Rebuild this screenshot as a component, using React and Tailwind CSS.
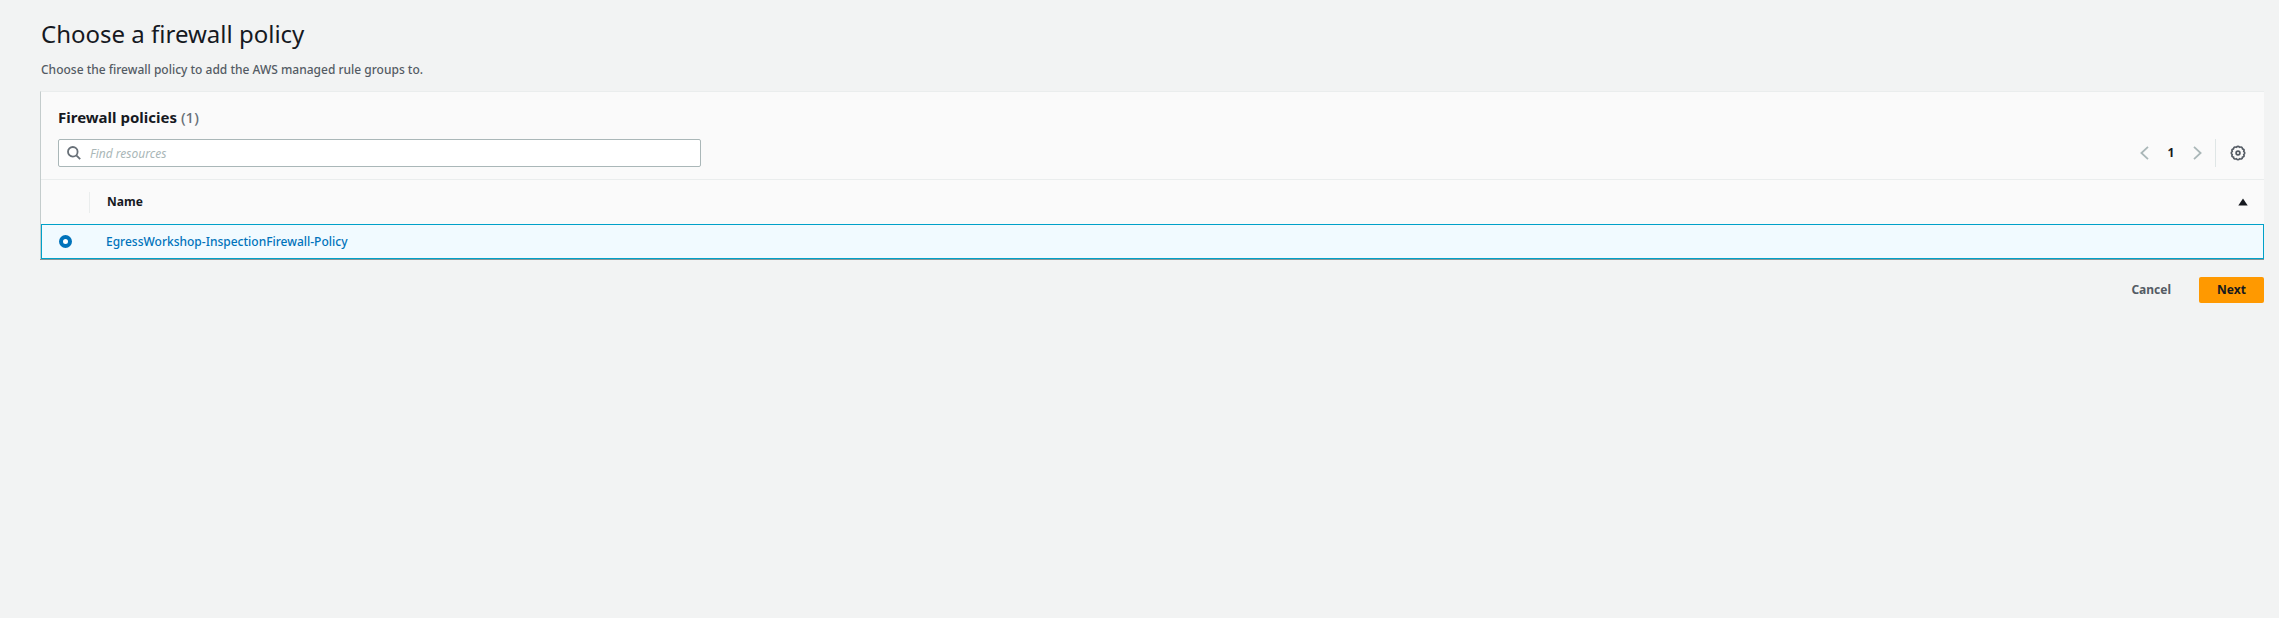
import React from "react";

const policies = [{ id: "egress", name: "EgressWorkshop-InspectionFirewall-Policy" }];

function SearchIcon() {
  return (
    <svg viewBox="0 0 14 14" className="pointer-events-none absolute left-[9px] size-[14px]" fill="none" stroke="#687078" strokeWidth="1.8" aria-hidden="true">
      <circle cx="5.8" cy="5.8" r="4.8" />
      <path d="M9.3 9.3 13.2 13.2" />
    </svg>
  );
}

function Chevron({ d }) {
  return (
    <svg viewBox="0 0 9 14" className="h-[14px] w-[9px]" fill="none" stroke="#aab7b8" strokeWidth="1.8" aria-hidden="true">
      <path d={d} />
    </svg>
  );
}

function GearIcon() {
  return (
    <svg viewBox="0 0 16 16" className="size-4" fill="none" stroke="#545b64" strokeLinejoin="round" aria-hidden="true">
      <path
        strokeWidth="1.7"
        d="M6.3 2.3Q8 .3 9.7 2.3Q12.4 1.3 12.4 3.8Q14.9 4.3 13.7 6.4Q15.7 8 13.7 9.6Q14.9 11.7 12.4 12.2Q12.4 14.7 9.7 13.7Q8 15.7 6.3 13.7Q3.6 14.7 3.6 12.2Q1.1 11.7 2.3 9.6Q.3 8 2.3 6.4Q1.1 4.3 3.6 3.8Q3.6 1.3 6.3 2.3Z"
      />
      <circle cx="8" cy="8" r="1.9" strokeWidth="1.7" />
    </svg>
  );
}

export default function App() {
  return (
    <div className="min-h-screen bg-[#f2f3f3] pt-4 pr-[15px] pl-10 font-['Noto_Sans','Open_Sans',sans-serif] text-[12px] leading-5 text-[#16191f]">
      <header className="px-px">
        <h1 className="text-[24px] leading-9">Choose a firewall policy</h1>
        <p className="mt-2 font-medium text-[#545b64]">Choose the firewall policy to add the AWS managed rule groups to.</p>
      </header>

      <main className="mt-[11px]">
        <section className="border-t border-l border-t-[#eaeded] border-l-[#c4cccc] bg-[#fafafa] shadow-[0_1px_0_#879596]">
          <div className="px-[17px] pt-[15px] pb-3">
            <h2 className="text-[15px] leading-5 font-bold">
              Firewall policies <span className="font-medium text-[#687078]">(1)</span>
            </h2>
            <div className="mt-3 flex items-center justify-between">
              <div className="relative flex w-full max-w-[643px] items-center">
                <input
                  type="search"
                  aria-label="Find resources"
                  placeholder="Find resources"
                  className="h-7 w-full rounded-[2px] border border-[#aab7b8] bg-white pr-3 pl-[31px] placeholder:text-[#aab7b8] placeholder:italic"
                />
                <SearchIcon />
              </div>
              <nav aria-label="Pagination" className="flex h-7 items-center pr-px">
                <button type="button" aria-label="Previous page" disabled>
                  <Chevron d="M8 .8 1.4 7 8 13.2" />
                </button>
                <button type="button" aria-current="page" className="w-11 text-center font-bold">1</button>
                <button type="button" aria-label="Next page" disabled>
                  <Chevron d="M1 .8 7.6 7 1 13.2" />
                </button>
                <span className="ml-[13px] h-7 w-px bg-[#dfe6e6]" />
                <button type="button" aria-label="Preferences" className="ml-[14px]">
                  <GearIcon />
                </button>
              </nav>
            </div>
          </div>

          <table className="w-full border-separate border-spacing-0 border-t border-[#eaeded] text-left">
            <thead>
              <tr className="h-11">
                <th className="w-[49px] p-0" aria-label="Selection">
                  <span className="ml-auto block h-[21px] w-px bg-[#eaeded]" />
                </th>
                <th className="py-0 pr-4 pl-[17px] font-bold">
                  <button type="button" className="flex w-full items-center justify-between">
                    Name
                    <svg viewBox="0 0 10 8" className="h-2 w-[10px]" fill="#16191f" aria-hidden="true">
                      <path d="M5 .4 9.7 7.6H.3Z" />
                    </svg>
                  </button>
                </th>
              </tr>
            </thead>
            <tbody>
              {policies.map((policy) => (
                <tr key={policy.id} className="h-[35px] bg-[#f1faff]">
                  <td className="border-y border-l border-[#00a1c9] py-0 pr-0 pl-[17px]">
                    <input
                      type="radio"
                      name="policy"
                      defaultChecked
                      aria-label={policy.name}
                      className="block size-[13px] appearance-none rounded-full border-4 border-[#0073bb] bg-white"
                    />
                  </td>
                  <td className="border-y border-r border-[#00a1c9] py-0 pr-4 pl-4">
                    <a href="#policy" className="font-medium text-[#0073bb]">{policy.name}</a>
                  </td>
                </tr>
              ))}
            </tbody>
          </table>
        </section>

        <div className="mt-[18px] flex justify-end gap-2 font-bold">
          <button type="button" className="h-[26px] px-5 text-[#545b64]">Cancel</button>
          <button type="button" className="h-[26px] w-[65px] rounded-[2px] bg-[#ff9900]">Next</button>
        </div>
      </main>
    </div>
  );
}
